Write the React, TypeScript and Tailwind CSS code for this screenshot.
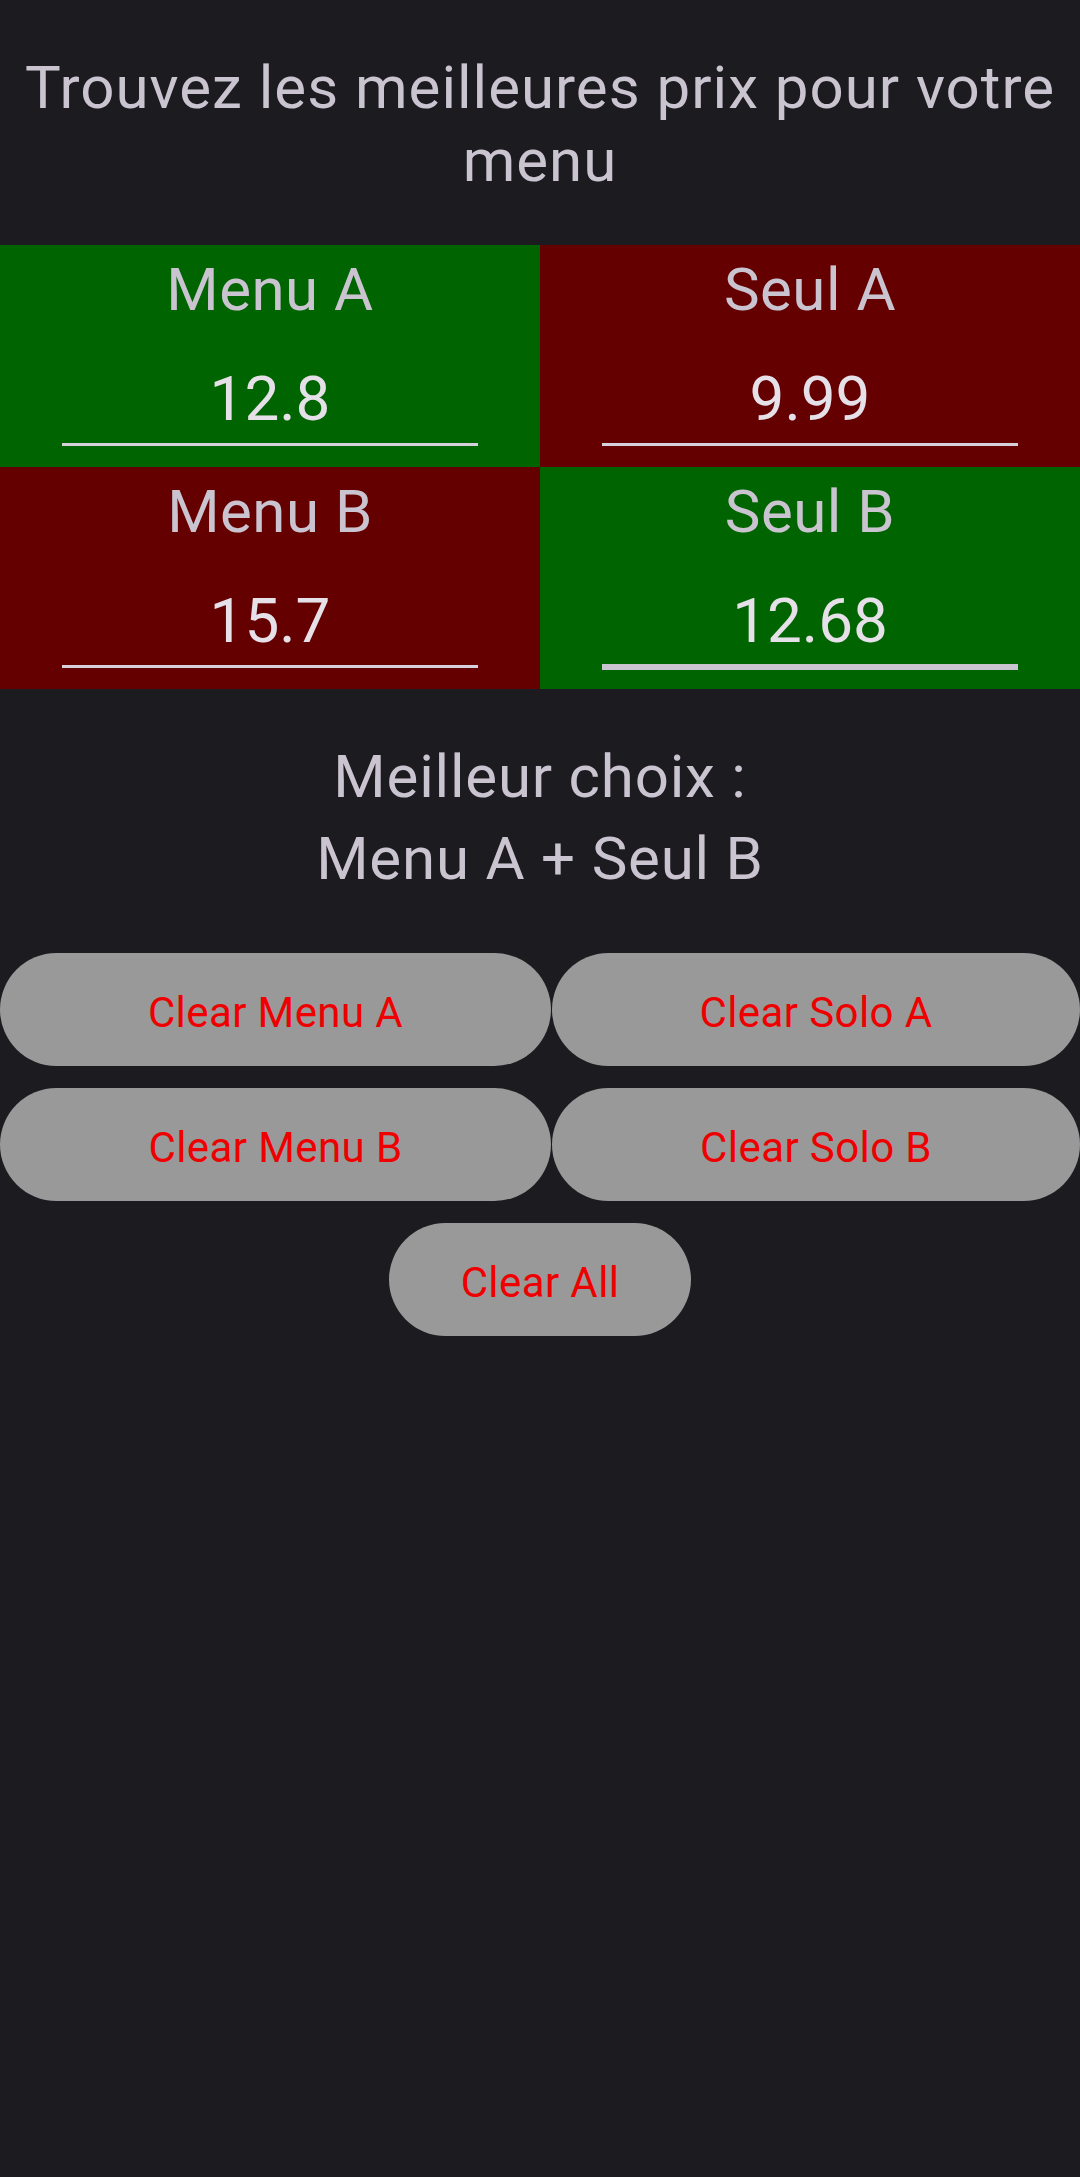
import React from "react";

const font = { fontFamily: "Roboto, 'Noto Sans', sans-serif" };

function Cell({ label, value, bg, focused }: { label: string; value: string; bg: string; focused?: boolean }) {
  return (
    <div className={`${bg} h-[222px] flex flex-col items-center pt-[9px]`}>
      <div className="text-[60px] leading-[72px] tracking-[0.5px] text-[#cac4d0]">{label}</div>
      <div
        className={`mt-[37px] w-[416px] text-center text-[62px] leading-[72px] text-[#e6e0e9] ${
          focused ? "pb-[7px] border-b-[6px] border-[#cac4d0]" : "pb-[8px] border-b-[3px] border-[#d6d0da]"
        }`}
      >
        {value}
      </div>
    </div>
  );
}

function Btn({ children, className }: { children: React.ReactNode; className: string }) {
  return (
    <div className={`${className} h-[113px] pt-[5px] rounded-full bg-[#999999] flex items-center justify-center text-[42px] tracking-[0.4px] text-[#ee0000]`}>
      {children}
    </div>
  );
}

export default function App() {
  return (
    <div className="w-[1080px] h-[2177px] bg-[#1c1b20] overflow-hidden" style={font}>
      <div className="pt-[51px] pb-[48px] text-center text-[60px] leading-[73px] tracking-[1px] text-[#cac4d0] px-[10px]">
        Trouvez les meilleures prix pour votre menu
      </div>
      <div className="grid grid-cols-2">
        <Cell label="Menu A" value="12.8" bg="bg-[#006400]" />
        <Cell label="Seul A" value="9.99" bg="bg-[#640000]" />
        <Cell label="Menu B" value="15.7" bg="bg-[#640000]" />
        <Cell label="Seul B" value="12.68" bg="bg-[#006400]" focused />
      </div>
      <div className="mt-[47px] text-center text-[60px] leading-[82px] tracking-[0.8px] text-[#cac4d0]">
        <div>Meilleur choix :</div>
        <div>Menu A + Seul B</div>
      </div>
      <div className="mt-[53px] flex flex-col gap-[22px]">
        <div className="flex gap-[1px]">
          <Btn className="w-[551px]">Clear Menu A</Btn>
          <Btn className="flex-1">Clear Solo A</Btn>
        </div>
        <div className="flex gap-[1px]">
          <Btn className="w-[551px]">Clear Menu B</Btn>
          <Btn className="flex-1">Clear Solo B</Btn>
        </div>
        <div className="flex justify-center">
          <Btn className="w-[302px]">Clear All</Btn>
        </div>
      </div>
    </div>
  );
}
